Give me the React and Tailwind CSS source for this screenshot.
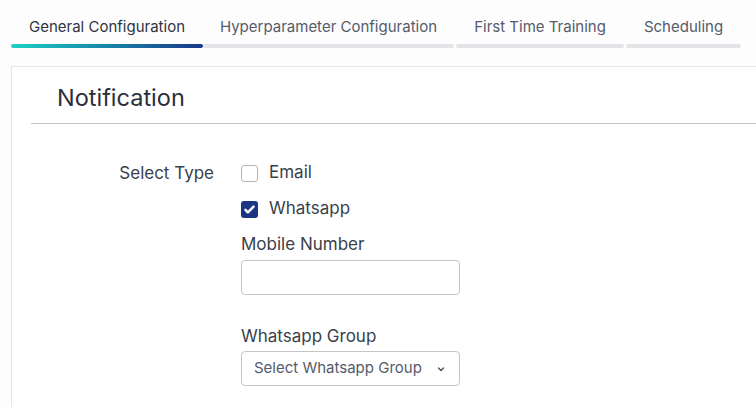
import React from "react";

export default function App() {
  const tabs = [
    { label: "General Configuration", w: "w-[192px]", active: true },
    { label: "Hyperparameter Configuration", w: "w-[251px]" },
    { label: "First Time Training", w: "w-[168px]" },
    { label: "Scheduling", w: "w-[115px]" },
  ];
  return (
    <div
      className="w-[756px] h-[407px] overflow-hidden bg-[#fdfdfd] text-[#2f3442]"
      style={{ fontFamily: "Inter, Roboto, 'Noto Sans', sans-serif" }}
    >
      <div className="flex pl-[11px] pt-[16px]">
        {tabs.map((t, i) => (
          <div key={i} className={`${t.w} flex flex-col ${i > 1 ? "ml-[2px]" : ""}`}>
            <div
              className={`h-[22px] text-[15px] leading-[22px] text-center ${
                t.active ? "text-[#2f3442]" : "text-[#545b6b]"
              }`}
            >
              {t.label}
            </div>
            <div
              className={`mt-[6px] h-[4px] ${
                t.active
                  ? "rounded-full bg-gradient-to-r from-[#1ed2c3] to-[#1b3589]"
                  : "bg-[#e3e4e7] rounded-[2px]"
              }`}
            />
          </div>
        ))}
      </div>
      <div className="ml-[11px] mt-[18px] border-l border-t border-[#e6e6e6] bg-white h-[400px]">
        <div className="pl-[45px] pt-[16px] h-[56px] text-[23.5px] leading-[30px] text-[#2a2f3a]">
          Notification
        </div>
        <div className="ml-[19px] h-px bg-[#c3c3c3]" />
        <div className="flex mt-[36px]">
          <div className="w-[202px] text-right text-[17px] leading-[26px] text-[#3a3f4b]">
            Select Type
          </div>
          <div className="ml-[27px] flex flex-col">
            <label className="flex items-center h-[26px]">
              <span className="w-[17px] h-[17px] rounded-[3px] border border-[#b5b5b5] bg-white" />
              <span className="ml-[11px] text-[17px] text-[#3a3f4b]">Email</span>
            </label>
            <label className="flex items-center h-[26px] mt-[10px]">
              <span className="w-[17px] h-[17px] rounded-[3px] bg-[#1c3484] flex items-center justify-center">
                <svg width="13" height="13" viewBox="0 0 16 16">
                  <path
                    d="M3 8.5l3 3 7-7"
                    fill="none"
                    stroke="white"
                    strokeWidth="3"
                    strokeLinecap="round"
                    strokeLinejoin="round"
                  />
                </svg>
              </span>
              <span className="ml-[11px] text-[17px] text-[#3a3f4b]">Whatsapp</span>
            </label>
            <div className="mt-[10px] text-[17px] leading-[24px] text-[#3a3f4b]">Mobile Number</div>
            <input className="mt-[4px] w-[219px] h-[35px] rounded-[4px] border border-[#c5c5c5] bg-white outline-none" />
            <div className="mt-[29px] text-[17px] leading-[24px] text-[#3a3f4b]">Whatsapp Group</div>
            <div className="mt-[3px] w-[219px] h-[35px] rounded-[4px] border border-[#c5c5c5] bg-white flex items-center pl-[12px] pr-[12px]">
              <span className="text-[15px] text-[#545b6b]">Select Whatsapp Group</span>
              <svg className="ml-auto mr-[1px]" width="10" height="10" viewBox="0 0 10 10">
                <path d="M2.5 4l2.5 2.5L7.5 4" fill="none" stroke="#4b5263" strokeWidth="1.4" strokeLinecap="round" strokeLinejoin="round" />
              </svg>
            </div>
          </div>
        </div>
      </div>
    </div>
  );
}
